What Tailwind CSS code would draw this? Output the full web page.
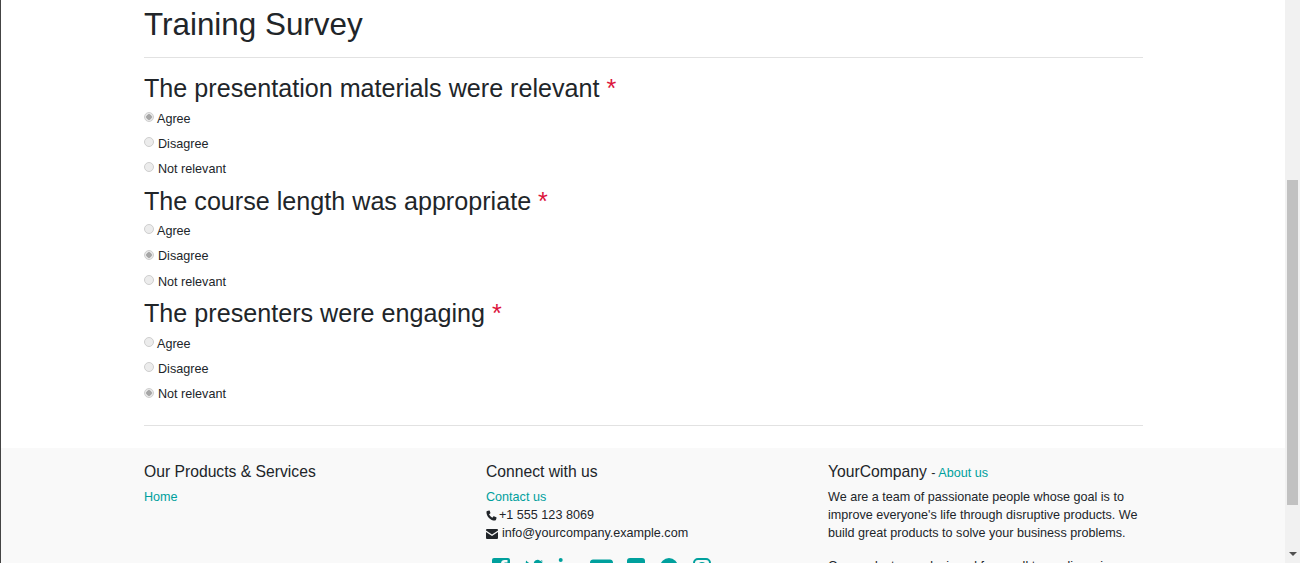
<!DOCTYPE html>
<html lang="en">
<head>
    <meta charset="UTF-8">
    <meta name="viewport" content="width=device-width, initial-scale=1.0">
    <title>Training Survey</title>
    <script src="https://cdn.jsdelivr.net/npm/@tailwindcss/browser@4"></script>
</head>
<body class="h-[563px] overflow-hidden bg-white font-['Liberation_Sans',Arial,sans-serif] text-[12.6px] leading-[19.5px] text-[#212529]">
    <div class="flex h-[563px]">
        <div class="w-[1285px] h-[563px] overflow-hidden border-l border-[#444]">
            <main class="w-[999px] ml-[143px]">
                <h1 class="text-[31.4px] leading-[39px] h-[58px] pt-[5px] border-b border-[#e2e2e2]">Training Survey</h1>
                <form class="pb-[17.4px] border-b border-[#e2e2e2]">
                    <fieldset>
                        <h3 class="text-[25.15px] leading-[29px] pt-[16px] mb-[3.6px]">The presentation materials were relevant <span class="text-[#dc143c]">*</span></h3>
                        <label class="flex items-center h-[25.33px] gap-[3px]"><input type="radio" name="q1" checked class="appearance-none shrink-0 size-[10px] -mt-[5px] rounded-full border border-[#cfcfcf] bg-[radial-gradient(circle,#a6a6a6_0,#a6a6a6_2.5px,#e8e8e8_3px)]">Agree</label>
                        <label class="flex items-center h-[25.33px] gap-[4px]"><input type="radio" name="q1" class="appearance-none shrink-0 size-[10px] -mt-[5px] rounded-full border border-[#cfcfcf] bg-[#ececec]">Disagree</label>
                        <label class="flex items-center h-[25.33px] gap-[4px]"><input type="radio" name="q1" class="appearance-none shrink-0 size-[10px] -mt-[5px] rounded-full border border-[#cfcfcf] bg-[#ececec]">Not relevant</label>
                    </fieldset>
                    <fieldset>
                        <h3 class="text-[25.15px] leading-[29px] pt-[4px] mb-[3.6px]">The course length was appropriate <span class="text-[#dc143c]">*</span></h3>
                        <label class="flex items-center h-[25.33px] gap-[3px]"><input type="radio" name="q2" class="appearance-none shrink-0 size-[10px] -mt-[5px] rounded-full border border-[#cfcfcf] bg-[#ececec]">Agree</label>
                        <label class="flex items-center h-[25.33px] gap-[4px]"><input type="radio" name="q2" checked class="appearance-none shrink-0 size-[10px] -mt-[5px] rounded-full border border-[#cfcfcf] bg-[radial-gradient(circle,#a6a6a6_0,#a6a6a6_2.5px,#e8e8e8_3px)]">Disagree</label>
                        <label class="flex items-center h-[25.33px] gap-[4px]"><input type="radio" name="q2" class="appearance-none shrink-0 size-[10px] -mt-[5px] rounded-full border border-[#cfcfcf] bg-[#ececec]">Not relevant</label>
                    </fieldset>
                    <fieldset>
                        <h3 class="text-[25.15px] leading-[29px] pt-[4px] mb-[3.6px]">The presenters were engaging <span class="text-[#dc143c]">*</span></h3>
                        <label class="flex items-center h-[25.33px] gap-[3px]"><input type="radio" name="q3" class="appearance-none shrink-0 size-[10px] -mt-[5px] rounded-full border border-[#cfcfcf] bg-[#ececec]">Agree</label>
                        <label class="flex items-center h-[25.33px] gap-[4px]"><input type="radio" name="q3" class="appearance-none shrink-0 size-[10px] -mt-[5px] rounded-full border border-[#cfcfcf] bg-[#ececec]">Disagree</label>
                        <label class="flex items-center h-[25.33px] gap-[4px]"><input type="radio" name="q3" checked class="appearance-none shrink-0 size-[10px] -mt-[5px] rounded-full border border-[#cfcfcf] bg-[radial-gradient(circle,#a6a6a6_0,#a6a6a6_2.5px,#e8e8e8_3px)]">Not relevant</label>
                    </fieldset>
                </form>
            </main>
            <footer class="mt-[22px] bg-[#f9f9f9] h-[200px] pt-[14px]">
                <div class="w-[1026px] ml-[143px] grid grid-cols-3 gap-0">
                    <div>
                        <h5 class="text-[15.7px] leading-[19px] mb-[7px]">Our Products &amp; Services</h5>
                        <a href="#" class="text-[#00a09d]">Home</a>
                    </div>
                    <div>
                        <h5 class="text-[15.7px] leading-[19px] mb-[7px]">Connect with us</h5>
                        <a href="#" class="block text-[#00a09d] h-[19px]">Contact us</a>
                        <div class="flex items-center gap-[2px] h-[18px]">
                            <svg class="size-[11px] -mt-[1px]" viewBox="0 0 24 24" fill="#212529"><path d="M6.6 1 2.500 2.200C1.600 2.500 1 3.300 1 4.300c0 10.300 8.400 18.700 18.700 18.700 1 0 1.800-.6 2.100-1.500l1.200-4.100c.2-.6-.1-1.200-.7-1.500l-5-2.100c-.5-.2-1.100-.1-1.400.4l-2 2.500c-3.100-1.500-5.700-4.100-7.200-7.200l2.500-2c.5-.3.6-.9.400-1.400L8.100 1.700C7.800 1.100 7.200.8 6.600 1z"/></svg>
                            <span>+1 555 123 8069</span>
                        </div>
                        <div class="flex items-center gap-[4px] h-[18px]">
                            <svg class="w-[12px] h-[10px]" viewBox="0 0 24 20" fill="#212529"><path d="M2 0h20a2 2 0 0 1 2 2v1L12 11 0 3V2a2 2 0 0 1 2-2zM0 6l12 8 12-8v12a2 2 0 0 1-2 2H2a2 2 0 0 1-2-2z"/></svg>
                            <span>info@yourcompany.example.com</span>
                        </div>
                        <div class="flex gap-[13px] mt-[14px] ml-[5px] text-[#00a09d]">
                            <svg class="size-[20px] shrink-0" viewBox="0 0 20 20" fill="currentColor"><path d="M3 1h14a2 2 0 0 1 2 2v14a2 2 0 0 1-2 2h-4v-7h3l.4-3H13V7c0-1 .4-1.500 1.500-1.500h2V3h-3C11 3 10 4.500 10 7v2H7.500v3H10v7H3a2 2 0 0 1-2-2V3a2 2 0 0 1 2-2z"/></svg>
                            <svg class="size-[20px] shrink-0" viewBox="0 0 20 20" fill="currentColor"><path d="M19 4.500c-.7.300-1.400.5-2.100.6.800-.5 1.300-1.200 1.600-2-.7.400-1.500.7-2.300.9a3.700 3.700 0 0 0-6.300 3.400C6.800 7.200 4.100 5.800 2.300 3.500c-1 1.700-.5 3.800 1.100 4.900-.6 0-1.200-.2-1.700-.5 0 1.800 1.300 3.300 3 3.700-.5.100-1.100.2-1.700.1.500 1.500 1.900 2.500 3.500 2.600A7.500 7.500 0 0 1 1 15.800 10.500 10.500 0 0 0 17.200 6.500c.7-.5 1.300-1.200 1.800-2z"/></svg>
                            <svg class="size-[20px] shrink-0" viewBox="0 0 20 20" fill="currentColor"><path d="M2 7h3.500v11H2zM3.700 1a2 2 0 1 1 0 4 2 2 0 0 1 0-4zM8 7h3.300v1.500c.5-.9 1.700-1.800 3.400-1.800 3.500 0 4.300 2.200 4.300 5.300v6h-3.500v-5.300c0-1.300 0-2.900-1.800-2.900s-2.200 1.400-2.200 2.800V18H8z"/></svg>
                            <svg class="w-[23px] h-[20px] shrink-0" viewBox="0 0 23 20" fill="currentColor"><path d="M3 2.500h17c1.500 0 3 1.200 3 3v10c0 1.800-1.500 3-3 3H3c-1.500 0-3-1.200-3-3v-10c0-1.800 1.500-3 3-3zm6 4.500v7l6-3.500z"/></svg>
                            <svg class="size-[20px] shrink-0" viewBox="0 0 20 20" fill="currentColor"><path d="M4 1h12a3 3 0 0 1 3 3v12a3 3 0 0 1-3 3H4a3 3 0 0 1-3-3V4a3 3 0 0 1 3-3z"/></svg>
                            <svg class="size-[20px] shrink-0" viewBox="0 0 20 20" fill="currentColor"><circle cx="10" cy="10" r="9"/></svg>
                            <svg class="size-[20px] shrink-0" viewBox="0 0 20 20" fill="none" stroke="currentColor" stroke-width="2"><rect x="2" y="2" width="16" height="16" rx="4"/><circle cx="10" cy="10" r="4"/></svg>
                        </div>
                    </div>
                    <div>
                        <div class="mb-[7px] h-[19px]"><span class="text-[15.7px] leading-[19px]">YourCompany</span> <span class="ml-[1px]">-</span> <a href="#" class="text-[#00a09d]">About us</a></div>
                        <p class="w-[315px] leading-[18px]">We are a team of passionate people whose goal is to improve everyone's life through disruptive products. We build great products to solve your business problems.</p>
                        <p class="w-[315px] leading-[18px] mt-[15px]">Our products are designed for small to medium size</p>
                    </div>
                </div>
            </footer>
        </div>
        <div class="relative w-[15px] h-[563px] bg-[#f1f1f1]">
            <div class="absolute left-[2px] top-[180px] w-[11px] h-[325px] bg-[#c1c1c1]"></div>
            <div class="absolute left-[4px] top-[552px] w-0 h-0 border-x-[4px] border-x-transparent border-t-[4px] border-t-[#505050]"></div>
        </div>
    </div>
</body>
</html>
